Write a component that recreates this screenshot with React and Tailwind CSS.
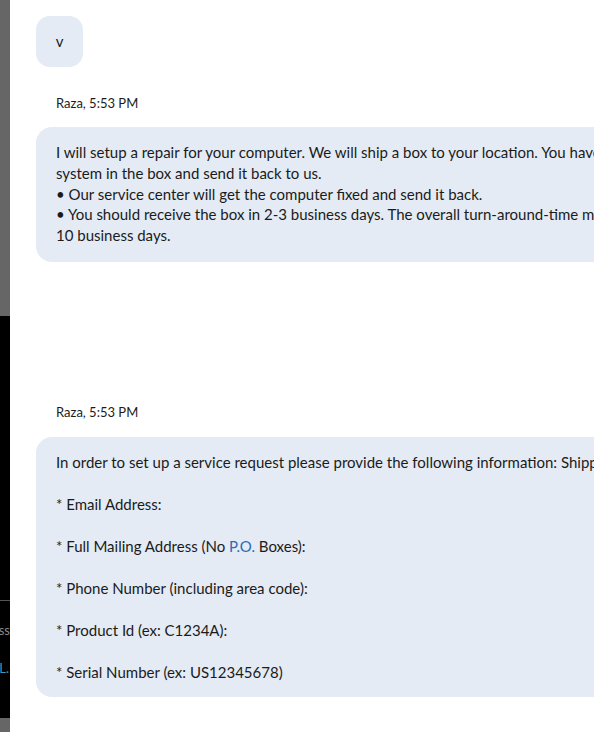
export default function App() {
  const font = { fontFamily: '"Lato", "Open Sans", sans-serif' };
  return (
    <div className="flex w-[594px] h-[732px] overflow-hidden bg-white" style={font}>
      <div className="w-[10px] shrink-0 flex flex-col overflow-hidden">
        <div className="h-[316px] bg-[#666666]" />
        <div className="h-[402px] bg-black relative overflow-hidden">
          <div className="absolute left-0 right-0 top-[284px] h-px bg-[#555555]" />
          <div className="absolute right-0 top-[306px] text-[13px] leading-[16px] text-[#8a8a8a] whitespace-nowrap">ss</div>
          <div className="absolute right-[1px] top-[344px] text-[13px] leading-[16px] text-[#3a9bb5] whitespace-nowrap">L.</div>
        </div>
        <div className="flex-1 bg-[#666666]" />
      </div>
      <div className="flex-1 min-w-0 overflow-hidden pl-[26px] pt-4 text-[#1b1b1b]">
        <div className="w-[47px] h-[51px] rounded-[14px] bg-[#e4ebf5] flex items-center justify-center text-[15px]">
          v
        </div>
        <div className="mt-[28px] pl-5 text-[13px] leading-4 h-4">Raza, 5:53 PM</div>
        <div className="mt-4 w-[620px] rounded-l-[16px] bg-[#e4ebf5] pl-5 pt-[15px] pb-4 text-[15px] leading-[20.8px] whitespace-nowrap">
          <div>I will setup a repair for your computer. We will ship a box to your location. You have to place the</div>
          <div>system in the box and send it back to us.</div>
          <div>• Our service center will get the computer fixed and send it back.</div>
          <div>• You should receive the box in 2-3 business days. The overall turn-around-time may be</div>
          <div>10 business days.</div>
        </div>
        <div className="mt-[142px] pl-5 text-[13px] leading-4 h-4">Raza, 5:53 PM</div>
        <div className="mt-[17px] w-[620px] rounded-l-[16px] bg-[#e4ebf5] pl-5 pt-[15px] pb-[14px] text-[15px] leading-[21px] whitespace-nowrap">
          <div>In order to set up a service request please provide the following information: Shipping</div>
          <div className="h-[21px]" />
          <div>* Email Address:</div>
          <div className="h-[21px]" />
          <div>
            * Full Mailing Address (No <span className="text-[#2b6cb5]">P.O.</span> Boxes):
          </div>
          <div className="h-[21px]" />
          <div>* Phone Number (including area code):</div>
          <div className="h-[21px]" />
          <div>* Product Id (ex: C1234A):</div>
          <div className="h-[21px]" />
          <div>* Serial Number (ex: US12345678)</div>
        </div>
      </div>
    </div>
  );
}
